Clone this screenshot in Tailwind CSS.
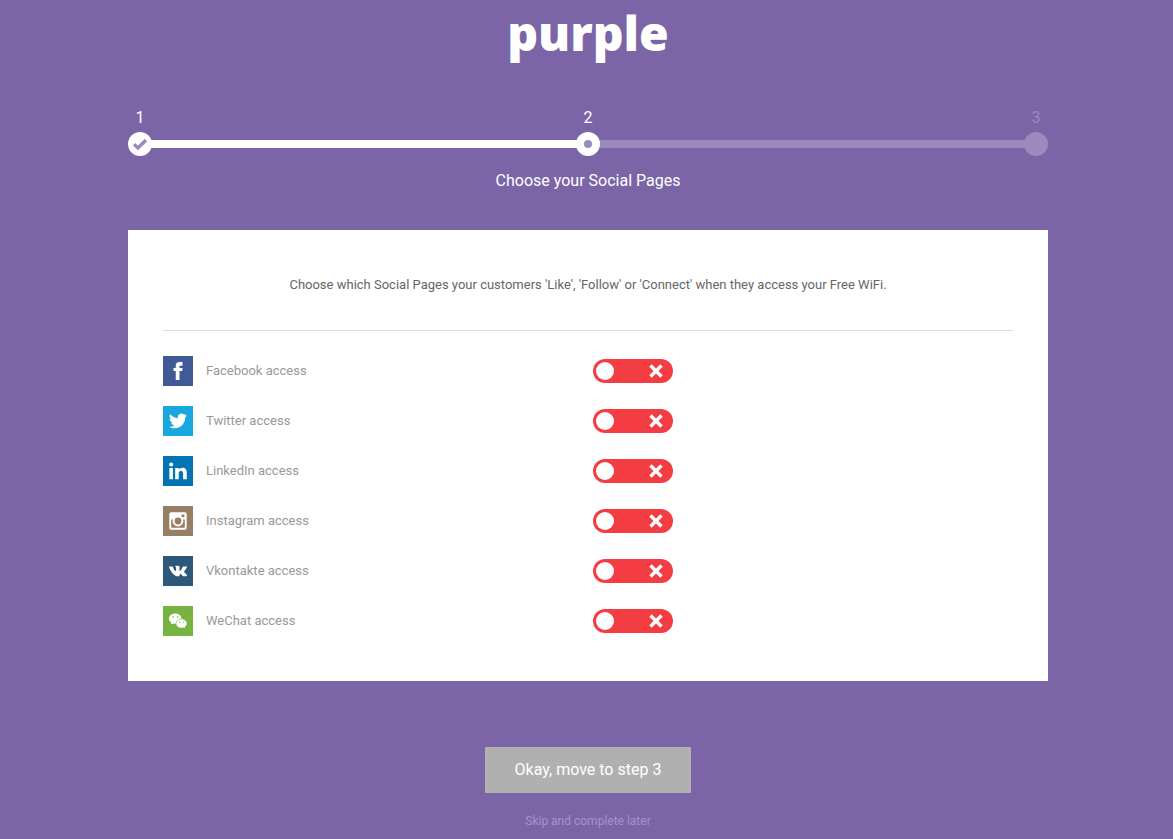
<!DOCTYPE html>
<html lang="en">
  <head>
    <meta charset="UTF-8" />
    <meta name="viewport" content="width=device-width, initial-scale=1.0" />
    <script src="https://cdn.jsdelivr.net/npm/@tailwindcss/browser@4"></script>
    <title>Purple | Social Pages</title>
  </head>
  <body class="min-h-screen bg-[#7b65a7] pl-[3px] font-[Roboto,sans-serif] text-white">
    <header class="flex h-[108px] justify-center">
      <a href="#" class="font-['Open_Sans',sans-serif] text-[48px] leading-[66px] font-extrabold">purple</a>
    </header>
    <main class="mx-auto max-w-[920px]">
      <!-- steps -->
      <div class="flex justify-between text-center text-base leading-5">
        <span class="w-6">1</span>
        <span class="w-6">2</span>
        <span class="w-6 text-[#9b8abd]">3</span>
      </div>
      <div class="mt-1 flex items-center">
        <div class="z-10 flex size-6 items-center justify-center rounded-full bg-white">
          <svg class="size-4" viewBox="0 0 16 16" fill="none" stroke="#9b8abd" stroke-width="3.4">
            <path d="M2 8.2 6 12 14 4" />
          </svg>
        </div>
        <div class="-mx-1 h-2 flex-1 bg-white"></div>
        <div class="z-10 flex size-6 items-center justify-center rounded-full bg-white">
          <div class="size-2 rounded-full bg-[#9b8abd]"></div>
        </div>
        <div class="-mx-1 h-2 flex-1 bg-[#9b8abd]"></div>
        <div class="size-6 rounded-full bg-[#9b8abd]"></div>
      </div>
      <h1 class="mt-[13px] text-center text-base leading-6">Choose your Social Pages</h1>

      <section class="mt-[37px] bg-white px-[35px] pt-[45px] pb-[45px] text-[13px] leading-5">
        <p class="border-b border-[#dcdcdc] pb-[35px] text-center text-[#666]">
          Choose which Social Pages your customers 'Like', 'Follow' or 'Connect' when they access your Free WiFi.
        </p>
        <form id="social_form" class="mt-[25px] flex flex-col gap-5 text-[#999]">
          <div class="grid grid-cols-2 items-center">
            <label for="facebook" class="flex items-center gap-[13px]">
              <span class="flex size-[30px] items-center justify-center bg-[#3f5a96]">
                <svg class="size-[18px]" viewBox="0 0 24 24" fill="#fff">
                  <path d="M9 8H6v4h3v12h5V12h3.642L18 8h-4V6.333C14 5.378 14.192 5 15.115 5H18V0h-3.808C10.596 0 9 1.583 9 4.615V8z" />
                </svg>
              </span>
              Facebook access
            </label>
            <div class="relative ml-[5px] h-6 w-20">
              <input id="facebook" type="checkbox" class="block h-6 w-20 cursor-pointer appearance-none rounded-full bg-[#f43c43]" />
              <span class="pointer-events-none absolute top-[3px] left-[3px] size-[18px] rounded-full bg-white"></span>
              <svg class="pointer-events-none absolute top-[5px] right-[10px] size-[14px]" viewBox="0 0 14 14" stroke="#fff" stroke-width="3.4">
                <path d="M1.5 1.5l11 11M12.5 1.5l-11 11" />
              </svg>
            </div>
          </div>
          <div class="grid grid-cols-2 items-center">
            <label for="twitter" class="flex items-center gap-[13px]">
              <span class="flex size-[30px] items-center justify-center bg-[#16a8df]">
                <svg class="size-[18px]" viewBox="0 0 24 24" fill="#fff">
                  <path d="M24 4.557a9.83 9.83 0 0 1-2.828.775 4.932 4.932 0 0 0 2.165-2.724 9.864 9.864 0 0 1-3.127 1.195 4.916 4.916 0 0 0-8.384 4.482C7.691 8.094 4.066 6.13 1.64 3.161a4.916 4.916 0 0 0 1.523 6.574 4.897 4.897 0 0 1-2.229-.616c-.054 2.281 1.581 4.415 3.949 4.89a4.935 4.935 0 0 1-2.224.084 4.918 4.918 0 0 0 4.6 3.419A9.9 9.9 0 0 1 0 19.54a13.94 13.94 0 0 0 7.548 2.212c9.142 0 14.307-7.721 13.995-14.646A10.025 10.025 0 0 0 24 4.557z" />
                </svg>
              </span>
              Twitter access
            </label>
            <div class="relative ml-[5px] h-6 w-20">
              <input id="twitter" type="checkbox" class="block h-6 w-20 cursor-pointer appearance-none rounded-full bg-[#f43c43]" />
              <span class="pointer-events-none absolute top-[3px] left-[3px] size-[18px] rounded-full bg-white"></span>
              <svg class="pointer-events-none absolute top-[5px] right-[10px] size-[14px]" viewBox="0 0 14 14" stroke="#fff" stroke-width="3.4">
                <path d="M1.5 1.5l11 11M12.5 1.5l-11 11" />
              </svg>
            </div>
          </div>
          <div class="grid grid-cols-2 items-center">
            <label for="linkedin" class="flex items-center gap-[13px]">
              <span class="flex size-[30px] items-center justify-center bg-[#0274b3]">
                <svg class="size-[18px]" viewBox="0 0 24 24" fill="#fff">
                  <circle cx="2.9" cy="3.4" r="2.7" />
                  <path d="M5.2 8H.5v15h4.7V8zm7.8 0H8.2v15H13v-7.9c0-4.4 5.8-4.7 5.8 0V23h4.9v-9.5c0-7.4-8.6-7.1-10.7-3.5V8z" />
                </svg>
              </span>
              LinkedIn access
            </label>
            <div class="relative ml-[5px] h-6 w-20">
              <input id="linkedin" type="checkbox" class="block h-6 w-20 cursor-pointer appearance-none rounded-full bg-[#f43c43]" />
              <span class="pointer-events-none absolute top-[3px] left-[3px] size-[18px] rounded-full bg-white"></span>
              <svg class="pointer-events-none absolute top-[5px] right-[10px] size-[14px]" viewBox="0 0 14 14" stroke="#fff" stroke-width="3.4">
                <path d="M1.5 1.5l11 11M12.5 1.5l-11 11" />
              </svg>
            </div>
          </div>
          <div class="grid grid-cols-2 items-center">
            <label for="instagram" class="flex items-center gap-[13px]">
              <span class="flex size-[30px] items-center justify-center bg-[#967f64]">
                <svg class="size-[18px]" viewBox="0 0 18 18">
                  <rect x=".3" y=".3" width="17.4" height="17.4" rx="2" fill="#fff" />
                  <path d="M2.2 7.6h13.6v7.2a1 1 0 0 1-1 1H3.2a1 1 0 0 1-1-1zM12.6 2.4h2.8v2.8h-2.8z" fill="#967f64" />
                  <circle cx="9" cy="9" r="5.4" fill="#fff" />
                  <circle cx="9" cy="9" r="3.4" fill="#967f64" />
                </svg>
              </span>
              Instagram access
            </label>
            <div class="relative ml-[5px] h-6 w-20">
              <input id="instagram" type="checkbox" class="block h-6 w-20 cursor-pointer appearance-none rounded-full bg-[#f43c43]" />
              <span class="pointer-events-none absolute top-[3px] left-[3px] size-[18px] rounded-full bg-white"></span>
              <svg class="pointer-events-none absolute top-[5px] right-[10px] size-[14px]" viewBox="0 0 14 14" stroke="#fff" stroke-width="3.4">
                <path d="M1.5 1.5l11 11M12.5 1.5l-11 11" />
              </svg>
            </div>
          </div>
          <div class="grid grid-cols-2 items-center">
            <label for="vkontakte" class="flex items-center gap-[13px]">
              <span class="flex size-[30px] items-center justify-center bg-[#2d5879]">
                <svg class="size-[18px]" viewBox="0 0 24 24" fill="#fff">
                  <path d="M13.162 18.994c.609 0 .858-.406.851-.915-.031-1.917.714-2.949 2.059-1.604 1.488 1.488 1.796 2.519 3.603 2.519h3.2c.808 0 1.126-.26 1.126-.668 0-.863-1.421-2.386-2.625-3.504-1.686-1.565-1.765-1.602-.313-3.486 1.801-2.339 4.157-5.336 2.073-5.336h-3.981c-.772 0-.828.435-1.103 1.083-.995 2.347-2.886 5.387-3.604 4.922-.751-.485-.407-2.406-.35-5.261.015-.754.011-1.271-1.141-1.539-.629-.145-1.241-.205-1.809-.205-2.273 0-3.841.953-2.95 1.119 1.571.293 1.42 3.692 1.054 5.16-.638 2.556-3.036-2.024-4.035-4.305-.241-.548-.315-.974-1.175-.974H.787C.295 6 0 6.16 0 6.516c0 .602 2.96 6.72 5.786 9.77 2.756 2.975 5.48 2.708 7.376 2.708z" />
                </svg>
              </span>
              Vkontakte access
            </label>
            <div class="relative ml-[5px] h-6 w-20">
              <input id="vkontakte" type="checkbox" class="block h-6 w-20 cursor-pointer appearance-none rounded-full bg-[#f43c43]" />
              <span class="pointer-events-none absolute top-[3px] left-[3px] size-[18px] rounded-full bg-white"></span>
              <svg class="pointer-events-none absolute top-[5px] right-[10px] size-[14px]" viewBox="0 0 14 14" stroke="#fff" stroke-width="3.4">
                <path d="M1.5 1.5l11 11M12.5 1.5l-11 11" />
              </svg>
            </div>
          </div>
          <div class="grid grid-cols-2 items-center">
            <label for="wechat" class="flex items-center gap-[13px]">
              <span class="flex size-[30px] items-center justify-center bg-[#76b340]">
                <svg class="size-[18px]" viewBox="0 0 18 18" fill="#fff">
                  <path d="M6.3 1.4C2.8 1.4 0 3.6 0 6.6c0 1.7.9 3.1 2.4 4l-.6 2 2.3-1.2c.7.2 1.4.3 2.2.3 3.5 0 6.3-2.3 6.3-5.1S9.8 1.4 6.3 1.4z" />
                  <path d="M12.5 6.9c-3.1 0-5.5 2-5.5 4.6s2.4 4.6 5.5 4.6c.6 0 1.2-.1 1.8-.3l2 1.1-.5-1.8c1.3-.8 2.2-2.1 2.2-3.6 0-2.6-2.4-4.6-5.5-4.6z" stroke="#76b340" stroke-width=".6" />
                  <g fill="#76b340">
                    <circle cx="4.2" cy="5" r=".8" />
                    <circle cx="8.5" cy="5" r=".8" />
                    <circle cx="10.7" cy="10.2" r=".6" />
                    <circle cx="14.3" cy="10.2" r=".6" />
                  </g>
                </svg>
              </span>
              WeChat access
            </label>
            <div class="relative ml-[5px] h-6 w-20">
              <input id="wechat" type="checkbox" class="block h-6 w-20 cursor-pointer appearance-none rounded-full bg-[#f43c43]" />
              <span class="pointer-events-none absolute top-[3px] left-[3px] size-[18px] rounded-full bg-white"></span>
              <svg class="pointer-events-none absolute top-[5px] right-[10px] size-[14px]" viewBox="0 0 14 14" stroke="#fff" stroke-width="3.4">
                <path d="M1.5 1.5l11 11M12.5 1.5l-11 11" />
              </svg>
            </div>
          </div>
        </form>
      </section>

      <div class="mt-[66px] flex flex-col items-center">
        <button type="submit" form="social_form" class="cursor-pointer bg-[#b0b0b0] px-[30px] py-[11px] text-base leading-6">
          Okay, move to step 3
        </button>
        <a href="#" class="mt-5 text-xs leading-4 text-[#a592cb]">Skip and complete later</a>
      </div>
    </main>
  </body>
</html>
